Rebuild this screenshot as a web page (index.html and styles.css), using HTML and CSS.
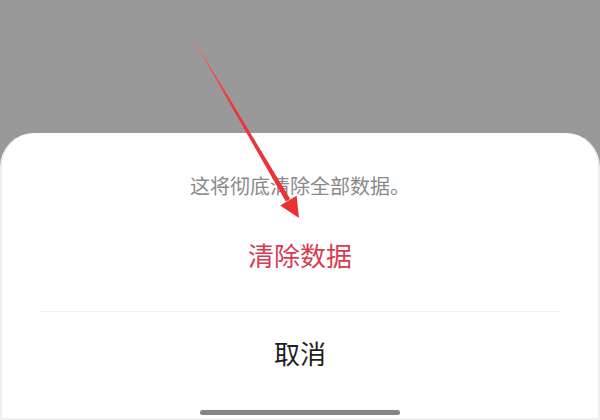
FILE: index.html
```html
<!DOCTYPE html>
<html lang="zh-CN">
<head>
<meta charset="utf-8">
<link rel="stylesheet" href="styles.css">
</head>
<body>
<div class="screen">
  <div class="sheet">
    <p class="msg">这将彻底清除全部数据。</p>
    <div class="danger">清除数据</div>
    <div class="divider"></div>
    <div class="cancel">取消</div>
    <div class="home"></div>
  </div>
  <svg class="arrow" width="600" height="420" viewBox="0 0 600 420">
    <defs>
      <linearGradient id="g" x1="195" y1="42" x2="298" y2="217" gradientUnits="userSpaceOnUse">
        <stop offset="0" stop-color="#e07a80"/>
        <stop offset="0.35" stop-color="#e9393f"/>
        <stop offset="1" stop-color="#ec2f33"/>
      </linearGradient>
    </defs>
    <polygon points="195.4,41.8 194.6,42.2 285.8,201.5 290.2,198.9" fill="url(#g)"/>
    <polygon points="299,218 280.2,205.4 296.6,195.8" fill="#ec2f33"/>
  </svg>
</div>
</body>
</html>
```
FILE: styles.css
```css
html, body {
  margin: 0;
  padding: 0;
}
body {
  background: #999999;
  font-family: "Noto Sans CJK SC", "Noto Sans", sans-serif;
}
.screen {
  position: relative;
  width: 600px;
  height: 420px;
  overflow: hidden;
  background: #999999;
  display: flex;
  flex-direction: column;
}
.sheet {
  margin-top: 133px;
  flex: 1;
  background: #ffffff;
  border-radius: 34px 34px 0 0;
  border-left: 2px solid #eeeeee;
  border-right: 2px solid #eeeeee;
  border-bottom: 2px solid #efefef;
  display: flex;
  flex-direction: column;
  align-items: center;
  box-sizing: border-box;
}
.msg {
  margin: 39px 0 0;
  font-size: 20px;
  line-height: 28px;
  color: #8a8a8a;
}
.danger {
  margin-top: 37px;
  font-size: 26px;
  line-height: 36px;
  color: #d83c52;
}
.divider {
  margin-top: 38px;
  width: 520px;
  height: 1px;
  background: #f0f0f0;
}
.cancel {
  margin-top: 23px;
  font-size: 26px;
  line-height: 36px;
  color: #1e1e1e;
}
.home {
  margin-top: 39px;
  width: 200px;
  height: 5px;
  border-radius: 3px;
  background: #858585;
}
.arrow {
  position: absolute;
  left: 0;
  top: 0;
}
```
